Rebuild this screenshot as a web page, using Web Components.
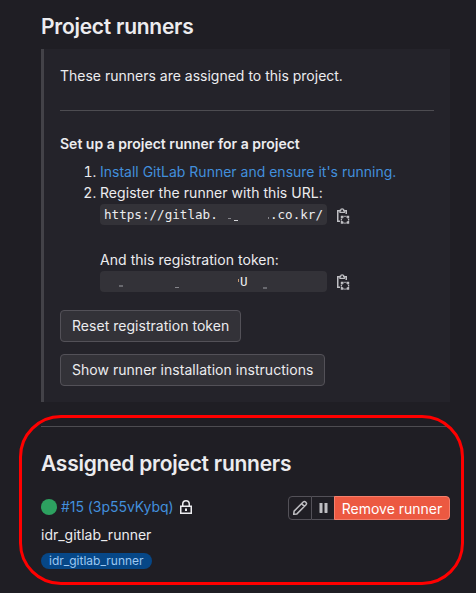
<!DOCTYPE html>
<html lang="en">
<head>
<meta charset="utf-8">
<title>Project runners</title>
<style>
html,body{margin:0;height:593px;overflow:hidden;background:#1f1e24}
body{font:14px/20px Inter,"Noto Sans",sans-serif;color:#ececef}
</style>
</head>
<body>
<runners-page></runners-page>
<script>
const define = (name, markup) => {
  const template = document.createElement('template');
  template.innerHTML = markup;
  customElements.define(name, class extends HTMLElement {
    constructor() {
      super();
      this.attachShadow({ mode: 'open' }).append(template.content.cloneNode(true));
    }
  });
};

define('section-title', `<style>
:host{display:block;font-size:21px;line-height:28px;font-weight:600;letter-spacing:-.012em;white-space:nowrap}
</style><slot></slot>`);

define('side-panel', `<style>
:host{display:flow-root;box-sizing:border-box;width:409px;height:353px;padding:17px 16px 0;border-left:3px solid #434248;background:#24232a}
</style><slot></slot>`);

define('rule-line', `<style>
:host{display:block;height:1px;background:#4d4c51}
</style>`);

define('copy-icon', `<style>
:host{display:block;width:16px;height:16px}svg{display:block}
</style><svg width="16" height="16" viewBox="0 0 16 16" fill="none" stroke="#bfbfc3" stroke-width="1.5">
<path d="M5 2.75H2.75V13.25H5M9.5 2.75H11.25V6"/>
<path d="M5 4.4V2.4H5.6C5.7 .4 8.6 .4 8.7 2.4H9.3V4.4Z" stroke-width="1.3"/>
<path d="M6.75 10.4V8.75H8.6M11.4 8.75H13.25V10.4M13.25 13.1V14.75H11.4M8.6 14.75H6.75V13.1" stroke-width="1.9"/><path d="M9.3 8.4H10.7M9.3 15.1H10.7M6.4 11.1V12.4M13.6 11.1V12.4" stroke-width="1.3"/></svg>`);

define('code-row', `<style>
:host{display:flex;align-items:flex-start;gap:8px;height:21px}
.code{box-sizing:border-box;width:227px;height:21px;padding:0 4px;border-radius:4px;background:#333238;font:12.6px/21px "DejaVu Sans Mono","Liberation Mono",monospace;white-space:pre;position:relative}
copy-icon{margin-top:var(--icon-top,4px)}
</style><div class="code"><slot></slot></div><copy-icon></copy-icon>`);

define('redaction-mark', `<style>
:host{position:absolute;display:block;height:1px;background:#85858b}
</style>`);

define('default-button', `<style>
:host{display:block;width:max-content}
button{display:block;box-sizing:border-box;width:100%;height:32px;padding:0 11px;border:1px solid #535158;border-radius:4px;background:#333238;color:inherit;font:inherit;letter-spacing:.03px;white-space:nowrap;text-align:left}
</style><button><slot></slot></button>`);

define('text-link', `<style>
:host{color:#428fdc;white-space:nowrap}
</style><slot></slot>`);

define('runner-actions', `<style>
:host{display:flex;box-sizing:border-box;width:162px;height:24px}
span{display:flex;box-sizing:border-box;align-items:center;justify-content:center;border:1px solid #535158;height:24px}
.edit{width:24px;border-radius:4px 0 0 4px}
.pause{width:23px;border-left:0;border-right:0}
.remove{width:116px;background:#ec5941;border-color:#f57f6c;border-radius:0 4px 4px 0;color:#fff;white-space:nowrap;margin-left:-1px;padding-top:2px}
</style>
<span class="edit"><svg width="16" height="16" viewBox="0 0 16 16" fill="none" stroke="#bfbfc3" stroke-width="1.5" stroke-linejoin="round"><path d="M1.7 14.3L2.1 11.1L11.2 2C12.9 .4 15.6 3.1 14 4.8L4.9 13.9ZM9.6 3.6L12.4 6.4"/></svg></span>
<span class="pause"><svg width="16" height="16" viewBox="0 0 16 16" fill="#bfbfc3"><rect x="3.5" y="3" width="3" height="10" rx=".4"/><rect x="8.5" y="3" width="3" height="10" rx=".4"/></svg></span>
<span class="remove"><slot></slot></span>`);

define('runner-badge', `<style>
:host{display:block;box-sizing:border-box;width:111px;height:16px;padding:0 8px;border-radius:8px;background:#064787;color:#9dc7f1;font-size:12px;line-height:15px;white-space:nowrap}
</style><slot></slot>`);

define('runner-item', `<style>
:host{display:block}
.row{display:flex;align-items:center;height:24px}
.dot{width:16px;height:16px;border-radius:50%;background:#2da160;margin:-2px 4px 0 0}
text-link{margin-top:-2px;letter-spacing:-.05px}
svg{margin-left:4px;margin-top:-2px}
runner-actions{margin-left:auto}
.name{margin-top:5px;height:20px}
runner-badge{margin-top:8px}
</style>
<div class="row"><i class="dot"></i><text-link><slot name="id"></slot></text-link>
<svg width="16" height="16" viewBox="0 0 16 16" fill="none" stroke="#ececef" stroke-width="1.5"><path d="M2.75 7.25H13.25V14.25H2.75ZM4.75 7V5A3.25 3.25 0 0 1 11.25 5V7"/><path d="M8 9.5V12" stroke-width="2"/></svg>
<runner-actions>Remove runner</runner-actions></div>
<div class="name"><slot name="name"></slot></div>
<runner-badge><slot name="tag"></slot></runner-badge>`);

define('highlight-frame', `<style>
:host{position:absolute;left:18.7px;top:415.2px;box-sizing:border-box;width:445.8px;height:170.3px;border:3px solid #f00;border-radius:42px}
</style>`);

define('runners-page', `<style>
:host{display:block;position:relative;box-sizing:border-box;width:476px;height:593px;padding:13px 26px 0 41px}
side-panel{margin-top:8px}
.line{height:20px;white-space:nowrap}
.first{margin-top:24px}
.setup{margin-top:23px;font-weight:600}
ol{margin:7px 0 0;padding:0 0 0 40px;line-height:21px}
li{white-space:nowrap;padding:0}
li + li{line-height:22px;letter-spacing:.05px}
.token-value{--icon-top:3px}
.token{margin-top:24px;height:22px;line-height:22px}
.reset{margin-top:18px}
.show{margin-top:12px}
.last{margin-top:24px}
.assigned{margin-top:23px}
runner-item{margin-top:18px}
code-row{letter-spacing:0}
</style>
<section-title>Project runners</section-title>
<side-panel>
<div class="line">These runners are assigned to this project.</div>
<rule-line class="first"></rule-line>
<div class="line setup">Set up a project runner for a project</div>
<ol>
<li><text-link>Install GitLab Runner and ensure it's running.</text-link></li>
<li>Register the runner with this URL:
<code-row>https://gitlab.<redaction-mark style="left:128px;top:14px;width:3px"></redaction-mark><redaction-mark style="left:134px;top:16px;width:4px;background:#d5d5d9"></redaction-mark><span style="position:absolute;right:4px">.co.kr/</span><redaction-mark style="left:168px;top:13px;width:1px;height:2px"></redaction-mark></code-row>
<div class="token">And this registration token:</div>
<code-row class="token-value"><redaction-mark style="left:19px;top:14px;width:4px;height:2px;background:#68686e"></redaction-mark><redaction-mark style="left:75px;top:16px;width:4px"></redaction-mark><redaction-mark style="left:138px;top:8px;width:1px;height:3px;background:#c99b74"></redaction-mark><span style="position:absolute;left:140px">U</span><redaction-mark style="left:163px;top:16px;width:4px;height:2px;background:#68686e"></redaction-mark></code-row></li>
</ol>
<default-button class="reset">Reset registration token</default-button>
<default-button class="show">Show runner installation instructions</default-button>
</side-panel>
<rule-line class="last"></rule-line>
<section-title class="assigned">Assigned project runners</section-title>
<runner-item><span slot="id">#15 (3p55vKybq)</span><span slot="name">idr_gitlab_runner</span><span slot="tag">idr_gitlab_runner</span></runner-item>
<highlight-frame></highlight-frame>`);
</script>
</body>
</html>
